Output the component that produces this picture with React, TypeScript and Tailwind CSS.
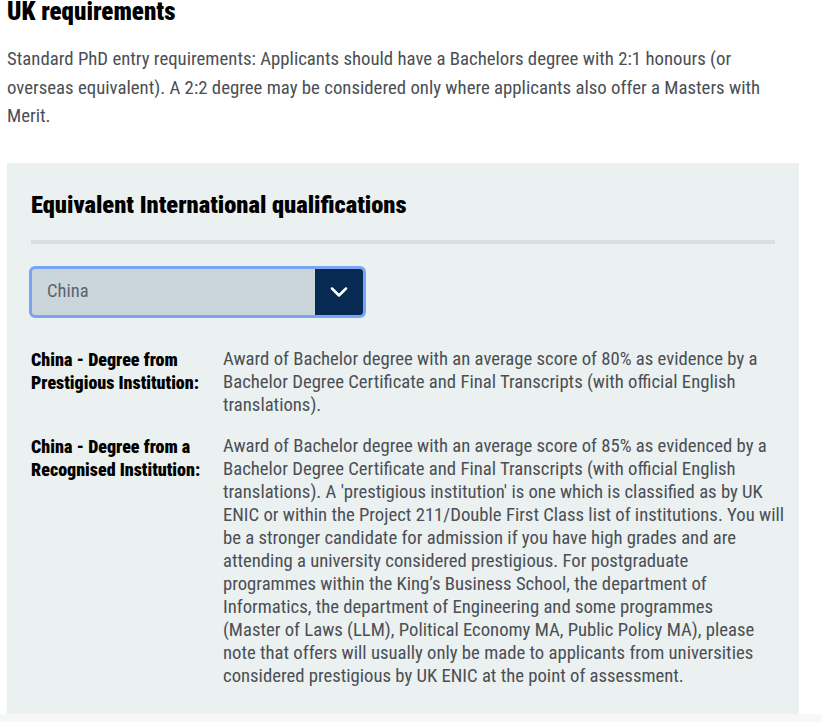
const rows = [
  {
    label: ["China - Degree from", "Prestigious Institution:"],
    lines: [
      "Award of Bachelor degree with an average score of 80% as evidence by a",
      "Bachelor Degree Certificate and Final Transcripts (with official English",
      "translations).",
    ],
  },
  {
    label: ["China - Degree from a", "Recognised Institution:"],
    lines: [
      "Award of Bachelor degree with an average score of 85% as evidenced by a",
      "Bachelor Degree Certificate and Final Transcripts (with official English",
      "translations). A 'prestigious institution' is one which is classified as by UK",
      "ENIC or within the Project 211/Double First Class list of institutions. You will",
      "be a stronger candidate for admission if you have high grades and are",
      "attending a university considered prestigious. For postgraduate",
      "programmes within the King\u2019s Business School, the department of",
      "Informatics, the department of Engineering and some programmes",
      "(Master of Laws (LLM), Political Economy MA, Public Policy MA), please",
      "note that offers will usually only be made to applicants from universities",
      "considered prestigious by UK ENIC at the point of assessment.",
    ],
  },
];

export default function App() {
  return (
    <div className="min-h-[722px] bg-white font-['Roboto',sans-serif] [font-stretch:condensed]">
      <div className="pl-[7px] pr-[23px]">
        {/* UK requirements */}
        <h2 className="mt-[-3px] text-[25px] leading-[30px] font-black text-black">UK requirements</h2>
        <p className="mt-[18px] w-[762px] text-[18.8px] leading-[28.5px] text-[#4a4f55]">
          Standard PhD entry requirements: Applicants should have a Bachelors degree with 2:1 honours (or overseas
          equivalent). A 2:2 degree may be considered only where applicants also offer a Masters with Merit.
        </p>

        {/* Equivalent qualifications panel */}
        <section className="mt-[32px] bg-[#ebf0f0] px-6 pt-[26px] pb-[26px]">
          <h3 className="text-[24.5px] leading-[32px] font-black text-black">Equivalent International qualifications</h3>
          <div className="mt-[19px] h-[4px] bg-[#d8dee2]" />

          <div className="mt-[22px] ml-[-2px] flex h-[52px] w-[337px] overflow-hidden rounded-[6px] border-[3px] border-[#7ca4f5] bg-[#cbd5dc]">
            <div className="flex flex-1 items-center pl-[15px] text-[18.5px] text-[#5b646c]">China</div>
            <div className="flex w-[48px] items-center justify-center bg-[#062a52]">
              <svg width="18" height="10" viewBox="0 0 18 10" fill="none" stroke="white" strokeWidth="2.5" strokeLinecap="round" strokeLinejoin="round">
                <path d="M2 1.5L9 8.5L16 1.5" />
              </svg>
            </div>
          </div>

          <div className="mt-[30px] flex flex-col gap-[18px]">
            {rows.map((r) => (
              <div key={r.label[0]} className="flex">
                <div className="w-[192px] shrink-0 text-[18px] leading-[23px] font-black text-black">
                  {r.label[0]}
                  <br />
                  {r.label[1]}
                </div>
                <div className="flex-1 text-[18.7px] leading-[23px] whitespace-nowrap text-[#4a4f55]">
                  {r.lines.map((l) => (
                    <div key={l}>{l}</div>
                  ))}
                </div>
              </div>
            ))}
          </div>
        </section>
      </div>
      <div className="h-[10px] bg-[#f7f7f7]" />
    </div>
  );
}
